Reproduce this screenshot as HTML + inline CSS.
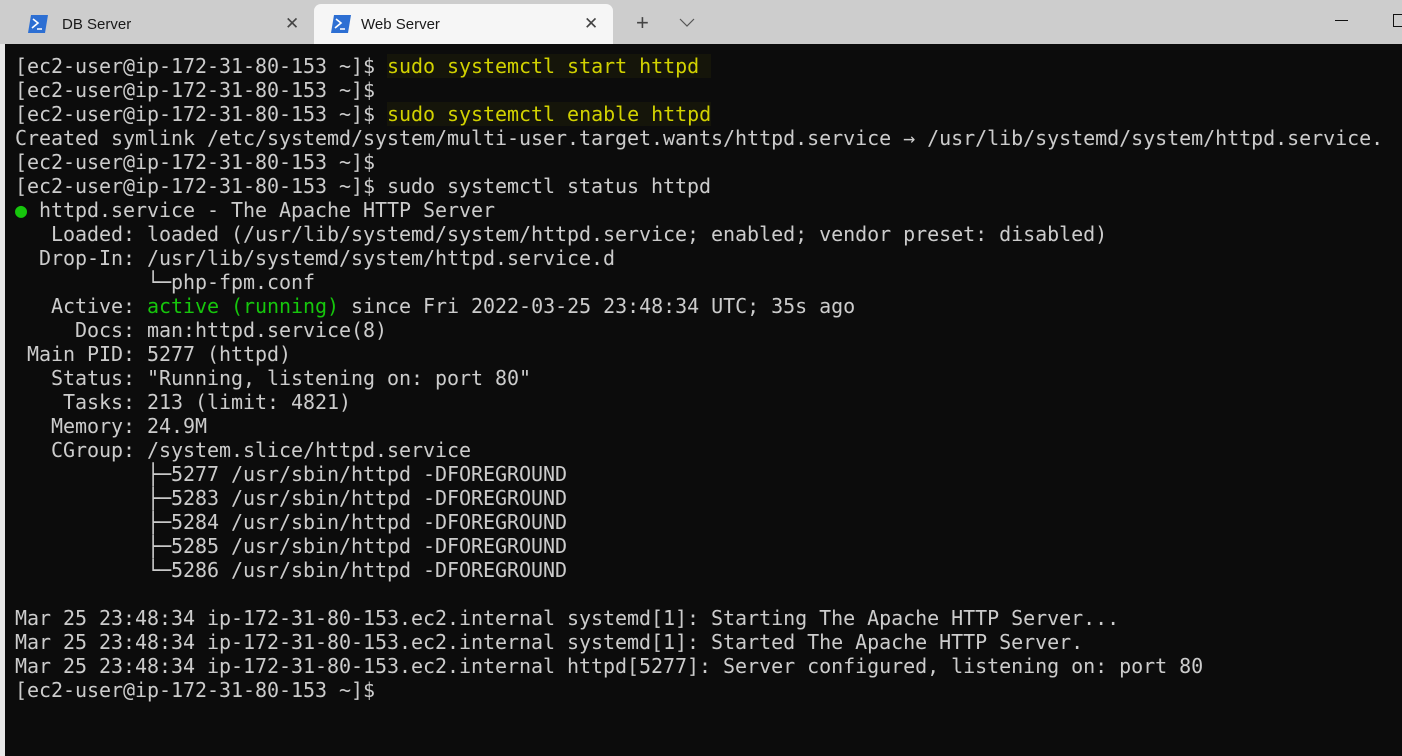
<!DOCTYPE html>
<html><head><meta charset="utf-8"><style>
html,body{margin:0;padding:0;width:1402px;height:756px;overflow:hidden;background:#0c0c0c;font-family:"Liberation Sans",sans-serif}
#bar{position:absolute;left:0;top:0;width:1402px;height:44px;background:#cdcdcd}
#strip{position:absolute;left:0;top:44px;width:5px;height:712px;background:#e8e8e8}
.tab{position:absolute;top:4px;height:40px;font-size:15px;color:#1a1a1a}
.tab .t{position:absolute;left:47px;top:12px}
.tab .x{position:absolute;top:10px;font-size:17px;color:#444}
#t2{left:314px;width:299px;background:#f6f6f6;border-radius:7px 7px 0 0}
#term{position:absolute;left:15px;top:54px;font-family:"DejaVu Sans Mono","Liberation Mono",monospace;font-size:20px;line-height:24px;color:#cccccc;white-space:pre;letter-spacing:-0.04px}
.y{color:#d2d200;background:#15150a}
.g{color:#16c60c}
</style></head><body>
<div id="bar">
 <div class="tab" style="left:0;width:312px">
  <svg style="position:absolute;left:28px;top:11px" width="20" height="18" viewBox="0 0 20 18"><path d="M3 0h17l-3 18H0z" fill="#2d6fd3"/><path d="M5 4l5 4-6 5" stroke="#fff" stroke-width="1.6" fill="none"/><path d="M9 14h5" stroke="#fff" stroke-width="1.5"/></svg>
  <span class="t" style="left:62px;top:12px">DB Server</span><span class="x" style="left:285px">✕</span></div>
 <div class="tab" id="t2">
  <svg style="position:absolute;left:17px;top:11px" width="20" height="18" viewBox="0 0 20 18"><path d="M3 0h17l-3 18H0z" fill="#2d6fd3"/><path d="M5 4l5 4-6 5" stroke="#fff" stroke-width="1.6" fill="none"/><path d="M9 14h5" stroke="#fff" stroke-width="1.5"/></svg>
  <span class="t">Web Server</span><span class="x" style="left:270px">✕</span></div>
 <div style="position:absolute;left:636px;top:10px;font-size:22px;color:#444">+</div>
 <svg style="position:absolute;left:679px;top:18px" width="16" height="9"><path d="M1 1l7 7 7-7" stroke="#555" stroke-width="1.2" fill="none"/></svg>
 <div style="position:absolute;left:1335px;top:20px;width:13px;height:1px;background:#111"></div>
 <div style="position:absolute;left:1393px;top:14px;width:12px;height:11px;border:1px solid #111"></div>
</div>
<div id="strip"></div>
<div id="term">[ec2-user@ip-172-31-80-153 ~]$ <span class="y">sudo systemctl start httpd </span>
[ec2-user@ip-172-31-80-153 ~]$
[ec2-user@ip-172-31-80-153 ~]$ <span class="y">sudo systemctl enable httpd</span>
Created symlink /etc/systemd/system/multi-user.target.wants/httpd.service → /usr/lib/systemd/system/httpd.service.
[ec2-user@ip-172-31-80-153 ~]$
[ec2-user@ip-172-31-80-153 ~]$ sudo systemctl status httpd
<span class="g">●</span> httpd.service - The Apache HTTP Server
   Loaded: loaded (/usr/lib/systemd/system/httpd.service; enabled; vendor preset: disabled)
  Drop-In: /usr/lib/systemd/system/httpd.service.d
           └─php-fpm.conf
   Active: <span class="g">active (running)</span> since Fri 2022-03-25 23:48:34 UTC; 35s ago
     Docs: man:httpd.service(8)
 Main PID: 5277 (httpd)
   Status: "Running, listening on: port 80"
    Tasks: 213 (limit: 4821)
   Memory: 24.9M
   CGroup: /system.slice/httpd.service
           ├─5277 /usr/sbin/httpd -DFOREGROUND
           ├─5283 /usr/sbin/httpd -DFOREGROUND
           ├─5284 /usr/sbin/httpd -DFOREGROUND
           ├─5285 /usr/sbin/httpd -DFOREGROUND
           └─5286 /usr/sbin/httpd -DFOREGROUND

Mar 25 23:48:34 ip-172-31-80-153.ec2.internal systemd[1]: Starting The Apache HTTP Server...
Mar 25 23:48:34 ip-172-31-80-153.ec2.internal systemd[1]: Started The Apache HTTP Server.
Mar 25 23:48:34 ip-172-31-80-153.ec2.internal httpd[5277]: Server configured, listening on: port 80
[ec2-user@ip-172-31-80-153 ~]$</div>
</body></html>
